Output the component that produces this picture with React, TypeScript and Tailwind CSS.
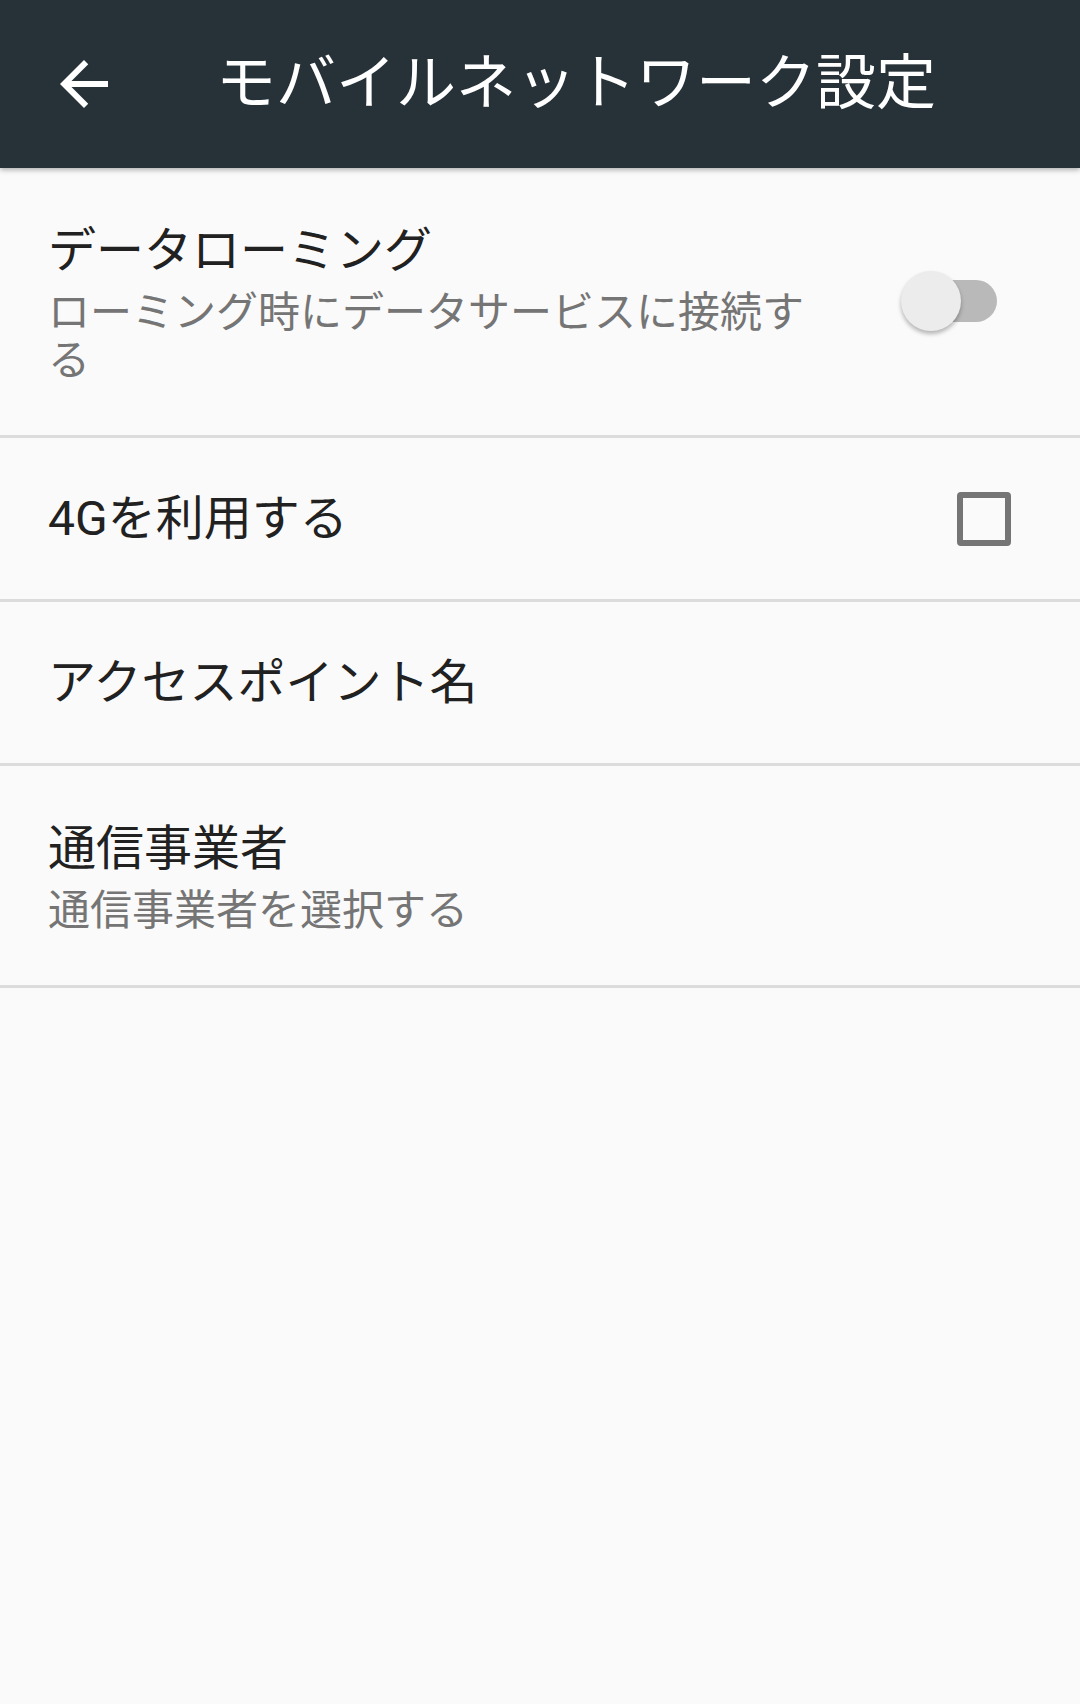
const font = { fontFamily: 'Roboto, "Noto Sans CJK JP", sans-serif' };

function Toggle() {
  return (
    <div className="relative w-[96px] h-[60px] mt-[5px] mr-[83px] shrink-0">
      <div className="absolute left-[2px] right-0 top-[9px] h-[42px] rounded-full bg-[#b9b9b9]" />
      <div className="absolute left-0 top-0 w-[60px] h-[60px] rounded-full bg-[#ececec] shadow-[0_3px_4px_rgba(0,0,0,0.28)]" />
    </div>
  );
}

function Checkbox() {
  return (
    <div className="w-[54px] h-[54px] mr-[69px] shrink-0 rounded-[4px] border-[6px] border-[#757575]" />
  );
}

function TwoLineRow({ title, summary, widget }: { title: string; summary: string; widget?: React.ReactNode }) {
  return (
    <div className="flex items-center pl-[48px] pt-[44px] pb-[50px] border-b-[3px] border-[#dcdcdc]">
      <div className="w-[780px] shrink-0">
        <div className="text-[48px] leading-[77px] text-[#212121]">{title}</div>
        <div className="text-[42px] leading-[48px] text-[#757575]">{summary}</div>
      </div>
      <div className="flex-1" />
      {widget}
    </div>
  );
}

function OneLineRow({ title, widget }: { title: string; widget?: React.ReactNode }) {
  return (
    <div className="flex items-center justify-between pl-[48px] h-[164px] border-b-[3px] border-[#dcdcdc]">
      <div className="text-[48px] leading-[66px] text-[#212121]">{title}</div>
      {widget}
    </div>
  );
}

export default function App() {
  return (
    <div className="w-[1080px] h-[1704px] bg-[#fafafa] overflow-hidden" style={font}>
      <header className="relative z-10 h-[168px] bg-[#263238] flex items-center shadow-[0_2px_5px_rgba(0,0,0,0.3)]">
        <div className="w-[72px] h-[72px] ml-[48px] shrink-0">
          <svg viewBox="0 0 24 24" width="72" height="72" fill="#ffffff">
            <path d="M20 11H7.83l5.59-5.59L12 4l-8 8 8 8 1.41-1.41L7.83 13H20v-2z" />
          </svg>
        </div>
        <h1 className="ml-[96px] text-[60px] leading-[80px] text-white">モバイルネットワーク設定</h1>
      </header>

      <TwoLineRow
        title="データローミング"
        summary="ローミング時にデータサービスに接続する"
        widget={<Toggle />}
      />
      <OneLineRow title="4Gを利用する" widget={<Checkbox />} />
      <OneLineRow title="アクセスポイント名" />
      <TwoLineRow title="通信事業者" summary="通信事業者を選択する" />
    </div>
  );
}
